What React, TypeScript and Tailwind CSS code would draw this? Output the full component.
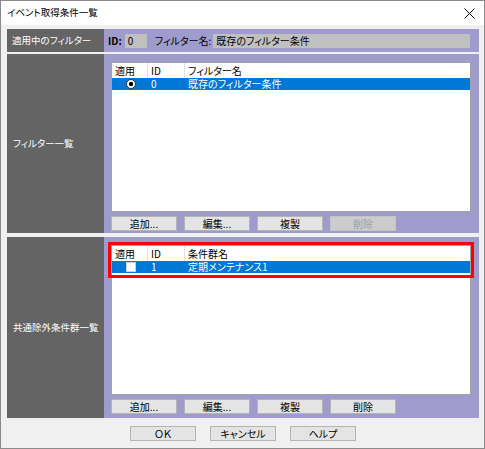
import React from "react";

const FONT = "font-['Noto_Sans_CJK_JP','Noto_Sans',sans-serif] [font-feature-settings:'palt']";

function Btn({ children, disabled }: { children: React.ReactNode; disabled?: boolean }) {
  return (
    <div
      className={
        disabled
          ? "w-[66px] h-[15px] flex items-center justify-center border border-[#c4c4c4] bg-[#cccccc] text-[#a0a0a0] text-[10px] leading-none"
          : "w-[66px] h-[15px] flex items-center justify-center border border-[#b4b4b4] bg-[#e4e4e4] text-black text-[10px] leading-none"
      }
    >
      {children}
    </div>
  );
}

function Radio() {
  return (
    <svg width="10" height="10" viewBox="0 0 10 10">
      <circle cx="5" cy="5" r="4.5" fill="#ffffff" stroke="#333333" strokeWidth="1" />
      <circle cx="5" cy="5" r="2.2" fill="#000000" />
    </svg>
  );
}

function Check() {
  return <div className="w-[10px] h-[10px] bg-white border border-[#d0d0d0]" />;
}

function List({
  nameHeader,
  mark,
  id,
  name,
  highlight,
}: {
  nameHeader: string;
  mark: React.ReactNode;
  id: string;
  name: string;
  highlight?: boolean;
}) {
  return (
    <div className="flex-1 bg-white border border-[#a3a3a3] relative text-[10px] leading-none">
      <div className="flex h-[15px] text-black">
        <div className="w-[36px] h-full pl-[3px] flex items-center border-r border-[#e3e3e3]">適用</div>
        <div className="w-[37px] h-full pl-[3px] flex items-center border-r border-[#e3e3e3]">ID</div>
        <div className="flex-1 h-full pl-[3px] flex items-center">{nameHeader}</div>
      </div>
      <div className="flex h-[12px] items-center bg-[#0078d7] text-white">
        <div className="w-[37px] flex justify-center items-center">{mark}</div>
        <div className="w-[37px] pl-[2px]">{id}</div>
        <div className="flex-1 pl-[2px]">{name}</div>
      </div>
      {highlight && (
        <div className="absolute left-[-4px] top-[-4px] w-[366px] h-[36px] border-[3px] border-[#ff0000]" />
      )}
    </div>
  );
}

function Section({
  label,
  height,
  pb,
  children,
  deleteDisabled,
}: {
  label: string;
  height: string;
  pb: string;
  children: React.ReactNode;
  deleteDisabled?: boolean;
}) {
  return (
    <div className={`flex ${height}`}>
      <div className="w-[97px] bg-[#646464] text-white text-[9.5px] leading-none flex items-center pl-[6px]">
        {label}
      </div>
      <div className={`flex-1 bg-[#9f9bcc] flex flex-col pt-[8px] pl-[7px] pr-[8px] ${pb}`}>
        {children}
        <div className="mt-[4px] flex gap-[7px]">
          <Btn>追加...</Btn>
          <Btn>編集...</Btn>
          <Btn>複製</Btn>
          <Btn disabled={deleteDisabled}>削除</Btn>
        </div>
      </div>
    </div>
  );
}

export default function App() {
  return (
    <div className={`w-[485px] h-[449px] border border-[#8a8a8a] bg-[#f0f0f0] flex flex-col ${FONT}`}>
      <div className="h-[24px] bg-white flex items-center justify-between pl-[6px] pr-[9px]">
        <span className="text-[9.5px] text-black leading-none">イベント取得条件一覧</span>
        <svg width="11" height="11" viewBox="0 0 11 11">
          <path d="M0.5 0.5 L10.5 10.5 M10.5 0.5 L0.5 10.5" stroke="#000" strokeWidth="1" />
        </svg>
      </div>
      <div className="flex-1 flex flex-col pt-[4px] pl-[6px] pr-[5px]">
        <div className="flex h-[23px]">
          <div className="w-[97px] bg-[#646464] text-white text-[9.5px] leading-none flex items-center pl-[5px]">
            適用中のフィルター
          </div>
          <div className="flex-1 bg-[#9f9bcc] flex items-center pl-[4px] pr-[9px] text-[10px] leading-none text-black">
            <span className="font-semibold">ID:</span>
            <div className="ml-[3px] w-[22px] h-[14px] bg-[#c0c0c0] flex items-center pl-[3px]">0</div>
            <span className="ml-[8px]">フィルター名:</span>
            <div className="ml-[2px] flex-1 h-[14px] bg-[#c0c0c0] flex items-center pl-[3px]">既存のフィルター条件</div>
          </div>
        </div>
        <div className="h-[2px]" />
        <Section label="フィルター一覧" height="h-[179px]" pb="pb-[2px]" deleteDisabled>
          <List nameHeader="フィルター名" mark={<Radio />} id="0" name="既存のフィルター条件" />
        </Section>
        <div className="h-[4px]" />
        <Section label="共通除外条件群一覧" height="h-[181px]" pb="pb-[4px]">
          <List nameHeader="条件群名" mark={<Check />} id="1" name="定期メンテナンス1" highlight />
        </Section>
        <div className="flex-1 flex justify-center gap-[14px] pt-[8px]">
          <Btn>ＯＫ</Btn>
          <Btn>キャンセル</Btn>
          <Btn>ヘルプ</Btn>
        </div>
      </div>
    </div>
  );
}
